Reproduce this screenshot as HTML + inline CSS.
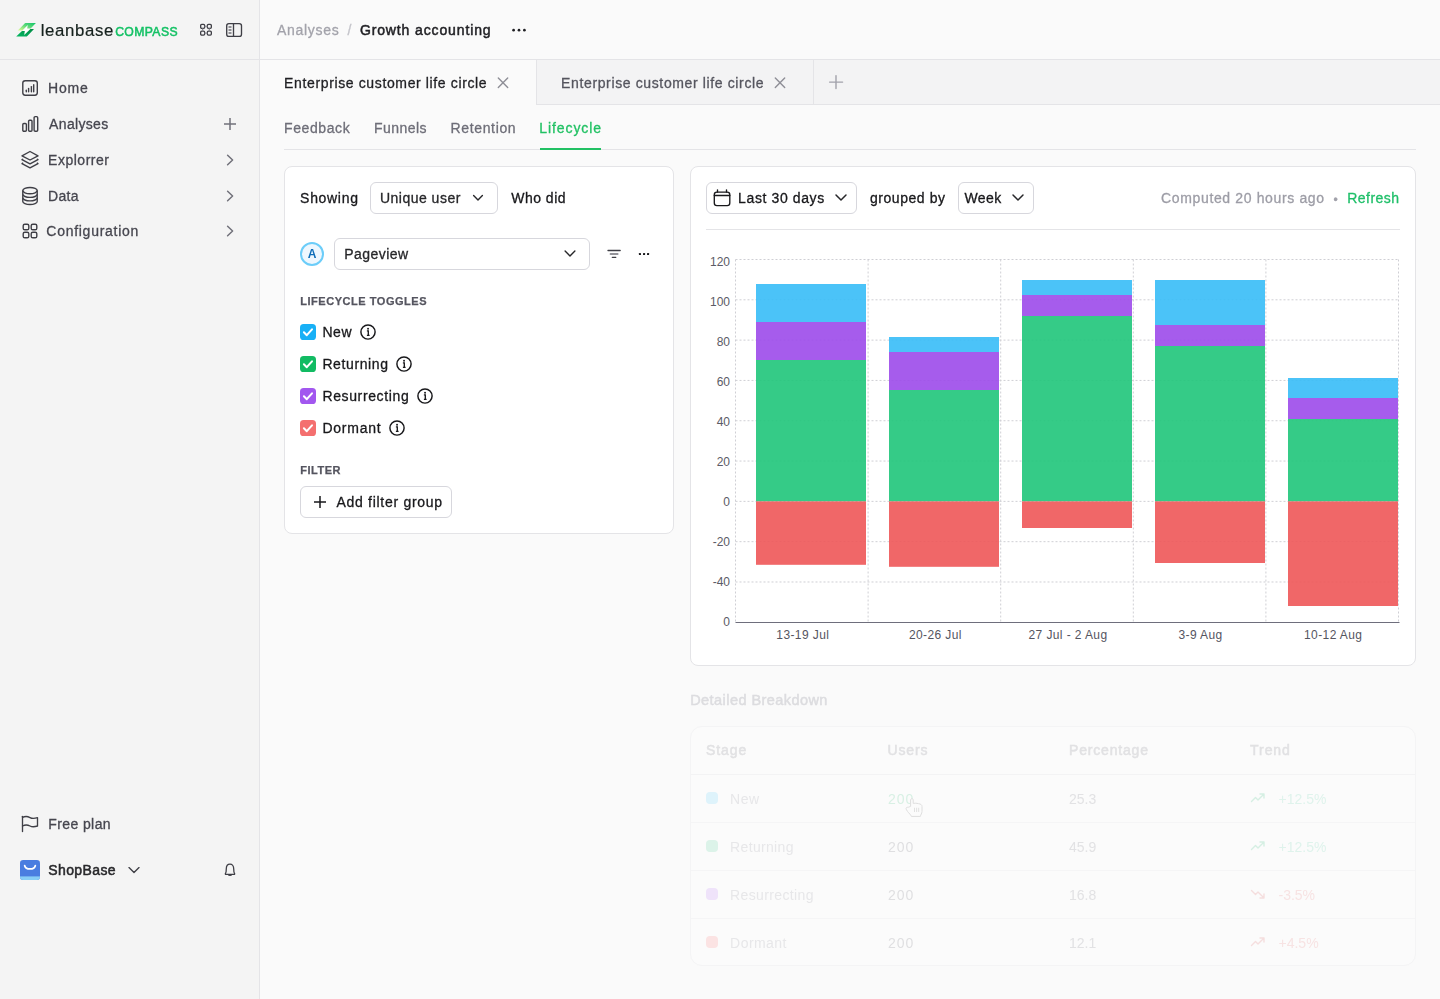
<!DOCTYPE html>
<html><head><meta charset="utf-8"><style>
html,body{margin:0;padding:0;width:1440px;height:999px;overflow:hidden;background:#fafafa;font-family:"Liberation Sans", sans-serif;}
.abs{position:absolute;}
.t{position:absolute;white-space:pre;line-height:1;}
.yl{left:670px;width:60px;text-align:right;font-size:12px;color:#5b5b66;line-height:12px;}
.xl{width:120px;text-align:center;font-size:12px;color:#55555f;letter-spacing:0.4px;}
.box{position:absolute;box-sizing:border-box;}
svg{overflow:visible;}
</style></head><body>
<!-- sidebar -->
<div class="box" style="left:0;top:0;width:260px;height:999px;background:#f4f4f4;border-right:1px solid #e4e4e7;"></div>
<div class="box" style="left:0;top:59px;width:259px;height:1px;background:#e4e4e7;"></div>
<!-- header -->
<div class="box" style="left:259px;top:59px;width:1181px;height:1px;background:#e4e4e7;"></div>
<!-- tab strip -->
<div class="box" style="left:536px;top:60px;width:904px;height:45px;background:#f3f3f4;border-left:1px solid #e4e4e7;border-bottom:1px solid #e4e4e7;"></div>
<div class="box" style="left:813px;top:60px;width:1px;height:44px;background:#e4e4e7;"></div>
<!-- subtab border -->
<div class="box" style="left:284px;top:149px;width:1132px;height:1px;background:#e4e4e7;"></div>
<div class="box" style="left:540px;top:148px;width:61px;height:2px;background:#22c164;"></div>
<!-- left card -->
<div class="box" style="left:284px;top:166px;width:390px;height:368px;background:#fff;border:1px solid #e4e4e7;border-radius:8px;"></div>
<div class="box" style="left:370px;top:182px;width:128px;height:32px;border:1px solid #d7d7dd;border-radius:6px;background:#fff;"></div>
<div class="box" style="left:334px;top:238px;width:256px;height:32px;border:1px solid #d7d7dd;border-radius:6px;background:#fff;"></div>
<div class="box" style="left:300px;top:242px;width:24px;height:24px;border:2px solid #6ccdf9;border-radius:50%;background:#eef7fe;"></div>
<div class="box" style="left:300px;top:486px;width:152px;height:32px;border:1px solid #d7d7dd;border-radius:6px;background:#fff;"></div>
<!-- chart card -->
<div class="box" style="left:690px;top:166px;width:726px;height:500px;background:#fff;border:1px solid #e4e4e7;border-radius:8px;"></div>
<div class="box" style="left:706px;top:182px;width:151px;height:32px;border:1px solid #d7d7dd;border-radius:6px;background:#fff;"></div>
<div class="box" style="left:958px;top:182px;width:76px;height:32px;border:1px solid #d7d7dd;border-radius:6px;background:#fff;"></div>
<div class="box" style="left:706px;top:229px;width:694px;height:1px;background:#e4e4e7;"></div>
<!-- breakdown table -->
<div class="box" style="left:690px;top:726px;width:726px;height:240px;border:1px solid #f4f4f5;border-radius:12px;background:#fbfbfb;"></div>
<div class="box" style="left:691px;top:774px;width:724px;height:1px;background:#f3f3f4;"></div>
<div class="box" style="left:691px;top:822px;width:724px;height:1px;background:#f5f5f6;"></div>
<div class="box" style="left:691px;top:870px;width:724px;height:1px;background:#f5f5f6;"></div>
<div class="box" style="left:691px;top:918px;width:724px;height:1px;background:#f5f5f6;"></div>
<div class="box" style="left:706px;top:792px;width:12px;height:12px;border-radius:4px;background:#def3fb;"></div>
<div class="box" style="left:706px;top:840px;width:12px;height:12px;border-radius:4px;background:#dcf3e9;"></div>
<div class="box" style="left:706px;top:888px;width:12px;height:12px;border-radius:4px;background:#efe3fa;"></div>
<div class="box" style="left:706px;top:936px;width:12px;height:12px;border-radius:4px;background:#fbe3e3;"></div>
<svg class="abs" style="left:0;top:0" width="1440" height="999"><g stroke="#cfcfd4" stroke-width="1" stroke-dasharray="2 2"><line x1="735.5" y1="259.50" x2="1398.5" y2="259.50"/><line x1="735.5" y1="299.81" x2="1398.5" y2="299.81"/><line x1="735.5" y1="340.12" x2="1398.5" y2="340.12"/><line x1="735.5" y1="380.43" x2="1398.5" y2="380.43"/><line x1="735.5" y1="420.74" x2="1398.5" y2="420.74"/><line x1="735.5" y1="461.06" x2="1398.5" y2="461.06"/><line x1="735.5" y1="501.37" x2="1398.5" y2="501.37"/><line x1="735.5" y1="541.68" x2="1398.5" y2="541.68"/><line x1="735.5" y1="581.99" x2="1398.5" y2="581.99"/><line x1="735.50" y1="259.5" x2="735.50" y2="622.3"/><line x1="868.10" y1="259.5" x2="868.10" y2="622.3"/><line x1="1000.70" y1="259.5" x2="1000.70" y2="622.3"/><line x1="1133.30" y1="259.5" x2="1133.30" y2="622.3"/><line x1="1265.90" y1="259.5" x2="1265.90" y2="622.3"/><line x1="1398.50" y1="259.5" x2="1398.50" y2="622.3"/></g><rect x="756" y="284" width="110" height="38" fill="#37bcf7" fill-opacity="0.9"/><rect x="756" y="322" width="110" height="38" fill="#9c4aea" fill-opacity="0.9"/><rect x="756" y="360" width="110" height="141.36666666666662" fill="#1fc57a" fill-opacity="0.9"/><rect x="756" y="501.3666666666666" width="110" height="63.43333333333334" fill="#ee5758" fill-opacity="0.9"/><rect x="889" y="337" width="110" height="15" fill="#37bcf7" fill-opacity="0.9"/><rect x="889" y="352" width="110" height="38" fill="#9c4aea" fill-opacity="0.9"/><rect x="889" y="390" width="110" height="111.36666666666662" fill="#1fc57a" fill-opacity="0.9"/><rect x="889" y="501.3666666666666" width="110" height="65.43333333333334" fill="#ee5758" fill-opacity="0.9"/><rect x="1022" y="280" width="110" height="15" fill="#37bcf7" fill-opacity="0.9"/><rect x="1022" y="295" width="110" height="21" fill="#9c4aea" fill-opacity="0.9"/><rect x="1022" y="316" width="110" height="185.36666666666662" fill="#1fc57a" fill-opacity="0.9"/><rect x="1022" y="501.3666666666666" width="110" height="26.633333333333383" fill="#ee5758" fill-opacity="0.9"/><rect x="1155" y="280" width="110" height="45" fill="#37bcf7" fill-opacity="0.9"/><rect x="1155" y="325" width="110" height="21" fill="#9c4aea" fill-opacity="0.9"/><rect x="1155" y="346" width="110" height="155.36666666666662" fill="#1fc57a" fill-opacity="0.9"/><rect x="1155" y="501.3666666666666" width="110" height="61.63333333333338" fill="#ee5758" fill-opacity="0.9"/><rect x="1288" y="378" width="110" height="20" fill="#37bcf7" fill-opacity="0.9"/><rect x="1288" y="398" width="110" height="21" fill="#9c4aea" fill-opacity="0.9"/><rect x="1288" y="419" width="110" height="82.36666666666662" fill="#1fc57a" fill-opacity="0.9"/><rect x="1288" y="501.3666666666666" width="110" height="104.63333333333338" fill="#ee5758" fill-opacity="0.9"/><line x1="735.5" y1="622.5" x2="1399.5" y2="622.5" stroke="#6e6e7c" stroke-width="1"/></svg>
<div class="t yl" style="top:256.40px;">120</div><div class="t yl" style="top:296.40px;">100</div><div class="t yl" style="top:336.40px;">80</div><div class="t yl" style="top:376.40px;">60</div><div class="t yl" style="top:416.40px;">40</div><div class="t yl" style="top:456.40px;">20</div><div class="t yl" style="top:496.40px;">0</div><div class="t yl" style="top:536.40px;">-20</div><div class="t yl" style="top:576.40px;">-40</div><div class="t yl" style="top:616.40px;">0</div><div class="t xl" style="left:742.80px;top:628.84px;">13-19 Jul</div><div class="t xl" style="left:875.40px;top:628.84px;">20-26 Jul</div><div class="t xl" style="left:1008.00px;top:628.84px;">27 Jul - 2 Aug</div><div class="t xl" style="left:1140.60px;top:628.84px;">3-9 Aug</div><div class="t xl" style="left:1273.20px;top:628.84px;">10-12 Aug</div>
<div style="position:absolute;left:0;top:0;width:1440px;height:999px;will-change:transform"><div class="t" style="left:48.11px;top:81.15px;font-size:14px;font-weight:400;color:#46464f;letter-spacing:0.787px;-webkit-text-stroke:0.3px #46464f;">Home</div>
<div class="t" style="left:49.11px;top:117.15px;font-size:14px;font-weight:400;color:#46464f;letter-spacing:0.330px;-webkit-text-stroke:0.3px #46464f;">Analyses</div>
<div class="t" style="left:48.11px;top:153.15px;font-size:14px;font-weight:400;color:#46464f;letter-spacing:0.503px;-webkit-text-stroke:0.3px #46464f;">Explorrer</div>
<div class="t" style="left:48.11px;top:188.95px;font-size:14px;font-weight:400;color:#46464f;letter-spacing:0.247px;-webkit-text-stroke:0.3px #46464f;">Data</div>
<div class="t" style="left:46.31px;top:223.95px;font-size:14px;font-weight:400;color:#46464f;letter-spacing:0.728px;-webkit-text-stroke:0.3px #46464f;">Configuration</div>
<div class="t" style="left:48.21px;top:817.35px;font-size:14px;font-weight:400;color:#46464f;letter-spacing:0.408px;-webkit-text-stroke:0.3px #46464f;">Free plan</div>
<div class="t" style="left:48.21px;top:862.85px;font-size:14px;font-weight:400;color:#27272a;letter-spacing:0.402px;-webkit-text-stroke:0.5px #27272a;">ShopBase</div>
<div class="t" style="left:40.71px;top:23.18px;font-size:16.8px;font-weight:400;color:#15211d;letter-spacing:0.660px;-webkit-text-stroke:0.2px #15211d;">leanbase</div>
<div class="t" style="left:115.17px;top:25.97px;font-size:12.2px;font-weight:400;color:#14c165;letter-spacing:0.388px;-webkit-text-stroke:0.5px #14c165;">COMPASS</div>
<div class="t" style="left:276.91px;top:23.15px;font-size:14px;font-weight:400;color:#a3a3ab;letter-spacing:0.730px;-webkit-text-stroke:0.3px #a3a3ab;">Analyses</div>
<div class="t" style="left:347.51px;top:23.15px;font-size:14px;font-weight:400;color:#c4c4ca;-webkit-text-stroke:0.3px #c4c4ca;">/</div>
<div class="t" style="left:359.91px;top:23.15px;font-size:14px;font-weight:400;color:#1f1f23;letter-spacing:0.874px;-webkit-text-stroke:0.5px #1f1f23;">Growth accounting</div>
<div class="t" style="left:284.11px;top:75.85px;font-size:14px;font-weight:400;color:#1f1f23;letter-spacing:0.630px;-webkit-text-stroke:0.3px #1f1f23;">Enterprise customer life circle</div>
<div class="t" style="left:561.11px;top:75.85px;font-size:14px;font-weight:400;color:#55555e;letter-spacing:0.627px;-webkit-text-stroke:0.3px #55555e;">Enterprise customer life circle</div>
<div class="t" style="left:284.11px;top:120.85px;font-size:14px;font-weight:400;color:#6e6e78;letter-spacing:0.577px;-webkit-text-stroke:0.3px #6e6e78;">Feedback</div>
<div class="t" style="left:373.91px;top:120.85px;font-size:14px;font-weight:400;color:#6e6e78;letter-spacing:0.485px;-webkit-text-stroke:0.3px #6e6e78;">Funnels</div>
<div class="t" style="left:450.51px;top:120.85px;font-size:14px;font-weight:400;color:#6e6e78;letter-spacing:0.648px;-webkit-text-stroke:0.3px #6e6e78;">Retention</div>
<div class="t" style="left:539.21px;top:120.85px;font-size:14px;font-weight:400;color:#22c164;letter-spacing:0.931px;-webkit-text-stroke:0.3px #22c164;">Lifecycle</div>
<div class="t" style="left:300.11px;top:191.35px;font-size:14px;font-weight:400;color:#18181b;letter-spacing:0.686px;-webkit-text-stroke:0.3px #18181b;">Showing</div>
<div class="t" style="left:379.91px;top:191.45px;font-size:14px;font-weight:400;color:#27272a;letter-spacing:0.492px;-webkit-text-stroke:0.3px #27272a;">Unique user</div>
<div class="t" style="left:511.21px;top:191.45px;font-size:14px;font-weight:400;color:#18181b;letter-spacing:0.493px;-webkit-text-stroke:0.3px #18181b;">Who did</div>
<div class="t" style="left:344.31px;top:246.75px;font-size:14px;font-weight:400;color:#27272a;letter-spacing:0.460px;-webkit-text-stroke:0.3px #27272a;">Pageview</div>
<div class="t" style="left:307.78px;top:248.24px;font-size:12px;font-weight:700;color:#0f6db8;">A</div>
<div class="t" style="left:300.22px;top:296.49px;font-size:11px;font-weight:700;color:#55555f;letter-spacing:0.538px;-webkit-text-stroke:0.25px #55555f;">LIFECYCLE TOGGLES</div>
<div class="t" style="left:322.41px;top:325.15px;font-size:14px;font-weight:400;color:#18181b;letter-spacing:0.602px;-webkit-text-stroke:0.3px #18181b;">New</div>
<div class="t" style="left:322.41px;top:357.15px;font-size:14px;font-weight:400;color:#18181b;letter-spacing:0.602px;-webkit-text-stroke:0.3px #18181b;">Returning</div>
<div class="t" style="left:322.41px;top:389.15px;font-size:14px;font-weight:400;color:#18181b;letter-spacing:0.631px;-webkit-text-stroke:0.3px #18181b;">Resurrecting</div>
<div class="t" style="left:322.41px;top:421.15px;font-size:14px;font-weight:400;color:#18181b;letter-spacing:0.772px;-webkit-text-stroke:0.3px #18181b;">Dormant</div>
<div class="t" style="left:300.22px;top:464.69px;font-size:11px;font-weight:700;color:#55555f;letter-spacing:0.519px;-webkit-text-stroke:0.25px #55555f;">FILTER</div>
<div class="t" style="left:336.41px;top:495.15px;font-size:14px;font-weight:400;color:#18181b;letter-spacing:0.718px;-webkit-text-stroke:0.3px #18181b;">Add filter group</div>
<div class="t" style="left:738.11px;top:191.05px;font-size:14px;font-weight:400;color:#18181b;letter-spacing:0.612px;-webkit-text-stroke:0.3px #18181b;">Last 30 days</div>
<div class="t" style="left:869.91px;top:191.05px;font-size:14px;font-weight:400;color:#18181b;letter-spacing:0.562px;-webkit-text-stroke:0.3px #18181b;">grouped by</div>
<div class="t" style="left:964.41px;top:191.05px;font-size:14px;font-weight:400;color:#18181b;letter-spacing:0.424px;-webkit-text-stroke:0.3px #18181b;">Week</div>
<div class="t" style="left:1161.11px;top:191.25px;font-size:14px;font-weight:400;color:#9d9da6;letter-spacing:0.635px;-webkit-text-stroke:0.3px #9d9da6;">Computed 20 hours ago</div>
<div class="t" style="left:1347.31px;top:191.25px;font-size:14px;font-weight:400;color:#1fbf69;letter-spacing:0.448px;-webkit-text-stroke:0.3px #1fbf69;">Refresh</div>
<div class="t" style="left:1333.38px;top:193.64px;font-size:12px;font-weight:400;color:#a1a1aa;-webkit-text-stroke:0.3px #a1a1aa;">•</div>
<div class="t" style="left:690.19px;top:693.03px;font-size:14.5px;font-weight:400;color:#dcdcdf;letter-spacing:0.440px;-webkit-text-stroke:0.5px #dcdcdf;">Detailed Breakdown</div>
<div class="t" style="left:706.11px;top:743.15px;font-size:14px;font-weight:400;color:#e1e1e3;letter-spacing:0.882px;-webkit-text-stroke:0.5px #e1e1e3;">Stage</div>
<div class="t" style="left:887.51px;top:743.15px;font-size:14px;font-weight:400;color:#e1e1e3;letter-spacing:0.839px;-webkit-text-stroke:0.5px #e1e1e3;">Users</div>
<div class="t" style="left:1069.01px;top:743.15px;font-size:14px;font-weight:400;color:#e1e1e3;letter-spacing:0.812px;-webkit-text-stroke:0.5px #e1e1e3;">Percentage</div>
<div class="t" style="left:1250.11px;top:743.15px;font-size:14px;font-weight:400;color:#e1e1e3;letter-spacing:0.914px;-webkit-text-stroke:0.5px #e1e1e3;">Trend</div>
<div class="t" style="left:730.11px;top:791.65px;font-size:14px;font-weight:400;color:#e7e7e9;letter-spacing:0.552px;">New</div>
<div class="t" style="left:887.91px;top:791.65px;font-size:14px;font-weight:400;color:#d8f0e4;letter-spacing:1.030px;">200</div>
<div class="t" style="left:1069.01px;top:791.65px;font-size:14px;font-weight:400;color:#e2e2e4;">25.3</div>
<div class="t" style="left:1278.51px;top:791.65px;font-size:14px;font-weight:400;color:#dff3ec;">+12.5%</div>
<div class="t" style="left:730.11px;top:839.65px;font-size:14px;font-weight:400;color:#e7e7e9;letter-spacing:0.327px;">Returning</div>
<div class="t" style="left:887.91px;top:839.65px;font-size:14px;font-weight:400;color:#dfdfe1;letter-spacing:1.030px;">200</div>
<div class="t" style="left:1069.01px;top:839.65px;font-size:14px;font-weight:400;color:#e2e2e4;">45.9</div>
<div class="t" style="left:1278.51px;top:839.65px;font-size:14px;font-weight:400;color:#dff3ec;">+12.5%</div>
<div class="t" style="left:730.11px;top:887.65px;font-size:14px;font-weight:400;color:#e7e7e9;letter-spacing:0.368px;">Resurrecting</div>
<div class="t" style="left:887.91px;top:887.65px;font-size:14px;font-weight:400;color:#dfdfe1;letter-spacing:1.030px;">200</div>
<div class="t" style="left:1069.01px;top:887.65px;font-size:14px;font-weight:400;color:#e2e2e4;">16.8</div>
<div class="t" style="left:1278.51px;top:887.65px;font-size:14px;font-weight:400;color:#f7e3e3;">-3.5%</div>
<div class="t" style="left:730.11px;top:935.65px;font-size:14px;font-weight:400;color:#e7e7e9;letter-spacing:0.439px;">Dormant</div>
<div class="t" style="left:887.91px;top:935.65px;font-size:14px;font-weight:400;color:#dfdfe1;letter-spacing:1.030px;">200</div>
<div class="t" style="left:1069.01px;top:935.65px;font-size:14px;font-weight:400;color:#e2e2e4;">12.1</div>
<div class="t" style="left:1278.51px;top:935.65px;font-size:14px;font-weight:400;color:#f7e3e3;">+4.5%</div></div>
<!-- logo mark -->
<svg class="abs" style="left:14px;top:20px" width="24" height="20" viewBox="0 0 24 20">
<defs><linearGradient id="lg1" x1="0.1" y1="1" x2="0.9" y2="0"><stop offset="0" stop-color="#d9fb92"/><stop offset="0.55" stop-color="#5fd97a"/><stop offset="1" stop-color="#17c66a"/></linearGradient>
<linearGradient id="lg2" x1="0" y1="1" x2="1" y2="0"><stop offset="0" stop-color="#05b862"/><stop offset="1" stop-color="#018a44"/></linearGradient></defs>
<path d="M13.8 5 L8.4 10.6 L10.8 10.9 L10.2 14.9 L16.4 9.1 L13.2 8.6 Z" fill="#fff"/>
<path d="M11.6 3 H21.9 L16.6 8.6 H13.2 L13.8 5 L8.4 10.6 H3.8 L10.2 3.9 Q10.9 3 11.6 3 Z" fill="url(#lg1)"/>
<path d="M8 10.9 H10.8 L10.2 14.9 L16.4 9.1 H20 L13.6 15.7 Q12.8 16.6 11.8 16.6 H2.2 Z" fill="url(#lg2)"/>
</svg>
<!-- grid icon -->
<svg class="abs" style="left:199px;top:23px" width="14" height="14" viewBox="0 0 14 14" fill="none" stroke="#3f3f46" stroke-width="1.3">
<rect x="1.65" y="1.45" width="4" height="4" rx="1.1"/><rect x="8.35" y="1.45" width="4" height="4" rx="1.1"/>
<rect x="1.65" y="8.15" width="4" height="4" rx="1.1"/><rect x="8.35" y="8.15" width="4" height="4" rx="1.1"/>
<g stroke="#8f8f96" stroke-width="1.3"><line x1="5.6" y1="3.45" x2="8.4" y2="3.45"/><line x1="5.6" y1="10.15" x2="8.4" y2="10.15"/><line x1="3.65" y1="5.4" x2="3.65" y2="8.2"/><line x1="10.35" y1="5.4" x2="10.35" y2="8.2"/></g>
</svg>
<!-- panel icon -->
<svg class="abs" style="left:225px;top:22px" width="18" height="16" viewBox="0 0 18 16" fill="none" stroke="#3f3f46" stroke-width="1.35">
<rect x="1.7" y="1.6" width="14.8" height="12.8" rx="2.2"/><line x1="8.5" y1="1.6" x2="8.5" y2="14.4"/>
<g stroke-width="1.3" stroke="#5a5a62"><line x1="3.5" y1="5" x2="6.5" y2="5"/><line x1="3.5" y1="8" x2="6.5" y2="8"/><line x1="3.5" y1="11" x2="6.5" y2="11"/></g>
</svg>
<!-- nav icons -->
<svg class="abs" style="left:21px;top:79px" width="18" height="18" viewBox="0 0 18 18" fill="none" stroke="#3f3f46" stroke-width="1.4" stroke-linecap="round">
<rect x="1.8" y="1.7" width="14.5" height="14.5" rx="2.4"/>
<line x1="5.3" y1="11.2" x2="5.3" y2="12.8"/><line x1="7.6" y1="9.4" x2="7.6" y2="12.8"/><line x1="10.4" y1="7.6" x2="10.4" y2="12.8"/><line x1="12.7" y1="5.8" x2="12.7" y2="12.8"/>
</svg>
<svg class="abs" style="left:21px;top:115px" width="18" height="18" viewBox="0 0 18 18" fill="none" stroke="#3f3f46" stroke-width="1.4">
<rect x="1.8" y="8.5" width="3.6" height="7.8" rx="1.1"/>
<rect x="7.6" y="5.3" width="3.4" height="11" rx="1"/>
<rect x="13.1" y="1.6" width="3.6" height="14.7" rx="1.1"/>
</svg>
<svg class="abs" style="left:21px;top:150px" width="18" height="20" viewBox="0 0 18 20" fill="none" stroke="#3f3f46" stroke-width="1.4" stroke-linejoin="round">
<path d="M9 1.5 L17 5.8 L9 10 L1 5.8 Z"/><path d="M2.2 9.1 L1 9.7 L9 13.9 L17 9.7 L15.8 9.1"/><path d="M2.2 13 L1 13.6 L9 17.8 L17 13.6 L15.8 13"/>
</svg>
<svg class="abs" style="left:21px;top:186px" width="18" height="20" viewBox="0 0 18 20" fill="none" stroke="#3f3f46" stroke-width="1.4">
<ellipse cx="9" cy="4.6" rx="7.2" ry="3.1"/><path d="M1.8 4.6 V15.4 A7.2 3.1 0 0 0 16.2 15.4 V4.6"/><path d="M1.8 8.3 A7.2 3.1 0 0 0 16.2 8.3"/><path d="M1.8 11.8 A7.2 3.1 0 0 0 16.2 11.8"/>
</svg>
<svg class="abs" style="left:21px;top:222px" width="18" height="18" viewBox="0 0 18 18" fill="none" stroke="#3f3f46" stroke-width="1.4">
<rect x="2.2" y="2.2" width="5.6" height="5.6" rx="1.6"/><rect x="10.2" y="2.2" width="5.6" height="5.6" rx="1.6"/>
<rect x="2.2" y="10.2" width="5.6" height="5.6" rx="1.6"/><rect x="10.2" y="10.2" width="5.6" height="5.6" rx="1.6"/>
</svg>
<!-- right side nav icons -->
<svg class="abs" style="left:222px;top:116px" width="16" height="16" viewBox="0 0 16 16" fill="none" stroke="#71717a" stroke-width="1.5"><line x1="8" y1="2" x2="8" y2="14"/><line x1="2" y1="8" x2="14" y2="8"/></svg>
<svg class="abs" style="left:222px;top:152px" width="16" height="16" viewBox="0 0 16 16" fill="none" stroke="#71717a" stroke-width="1.5" stroke-linecap="round" stroke-linejoin="round"><path d="M5.6 3.2 L10.6 8 L5.6 12.8"/></svg>
<svg class="abs" style="left:222px;top:188px" width="16" height="16" viewBox="0 0 16 16" fill="none" stroke="#71717a" stroke-width="1.5" stroke-linecap="round" stroke-linejoin="round"><path d="M5.6 3.2 L10.6 8 L5.6 12.8"/></svg>
<svg class="abs" style="left:222px;top:223px" width="16" height="16" viewBox="0 0 16 16" fill="none" stroke="#71717a" stroke-width="1.5" stroke-linecap="round" stroke-linejoin="round"><path d="M5.6 3.2 L10.6 8 L5.6 12.8"/></svg>
<!-- flag -->
<svg class="abs" style="left:20px;top:814px" width="20" height="20" viewBox="0 0 20 20" fill="none" stroke="#3f3f46" stroke-width="1.35" stroke-linecap="round" stroke-linejoin="round">
<path d="M2.5 2.3 V17.6"/><path d="M2.5 3.5 C6 1.5 8 2.5 10 3.6 C12 4.7 14 4.8 17.5 3.6 V12 C14 13.2 12 13.1 10 12 C8 10.9 6 10 2.5 12"/>
</svg>
<!-- shopbase -->
<svg class="abs" style="left:20px;top:860px" width="20" height="20" viewBox="0 0 20 20">
<clipPath id="sbc"><rect x="0" y="0" width="20" height="20" rx="3.2"/></clipPath>
<g clip-path="url(#sbc)"><rect width="20" height="20" fill="#4a7de0"/><rect y="16.4" width="20" height="3.6" fill="#88cdf6"/></g>
<path d="M4.7 5.7 C6 10 14 10 15.3 5.7" fill="none" stroke="#fff" stroke-width="1.8" stroke-linecap="round"/>
</svg>
<svg class="abs" style="left:126px;top:862px" width="16" height="16" viewBox="0 0 16 16" fill="none" stroke="#3f3f46" stroke-width="1.35" stroke-linecap="round" stroke-linejoin="round"><path d="M3 5.6 L8 10.6 L13 5.6"/></svg>
<!-- bell -->
<svg class="abs" style="left:222px;top:862px" width="16" height="16" viewBox="0 0 16 16" fill="none" stroke="#3f3f46" stroke-width="1.3" stroke-linejoin="round">
<path d="M3.4 11.6 C4.2 10.6 4.3 9 4.3 6.8 C4.3 4 5.9 2.2 8 2.2 C10.1 2.2 11.7 4 11.7 6.8 C11.7 9 11.8 10.6 12.6 11.6 C12.8 12 12.6 12.3 12.2 12.3 H3.8 C3.4 12.3 3.2 12 3.4 11.6 Z"/><path d="M6.4 12.4 C6.6 13.8 9.4 13.8 9.6 12.4"/>
</svg>
<!-- header dots -->
<svg class="abs" style="left:510px;top:22px" width="18" height="16" viewBox="0 0 18 16" fill="#1f1f23"><circle cx="3.6" cy="8.2" r="1.35"/><circle cx="9" cy="8.2" r="1.35"/><circle cx="14.4" cy="8.2" r="1.35"/></svg>
<!-- tab x icons -->
<svg class="abs" style="left:495px;top:75px" width="16" height="16" viewBox="0 0 16 16" fill="none" stroke="#8e8e96" stroke-width="1.4" stroke-linecap="round"><path d="M3.3 3 L12.7 12.4 M12.7 3 L3.3 12.4"/></svg>
<svg class="abs" style="left:772px;top:75px" width="16" height="16" viewBox="0 0 16 16" fill="none" stroke="#8e8e96" stroke-width="1.4" stroke-linecap="round"><path d="M3.3 3 L12.7 12.4 M12.7 3 L3.3 12.4"/></svg>
<svg class="abs" style="left:828px;top:74px" width="16" height="16" viewBox="0 0 16 16" fill="none" stroke="#a1a1aa" stroke-width="1.4" stroke-linecap="round"><path d="M8 1.6 V14.6 M1.6 8.1 H14.6"/></svg>
<!-- dropdown chevrons -->
<svg class="abs" style="left:470px;top:190px" width="16" height="16" viewBox="0 0 16 16" fill="none" stroke="#27272a" stroke-width="1.4" stroke-linecap="round" stroke-linejoin="round"><path d="M3.6 5.6 L8 10 L12.4 5.6"/></svg>
<svg class="abs" style="left:562px;top:245px" width="16" height="16" viewBox="0 0 16 16" fill="none" stroke="#27272a" stroke-width="1.4" stroke-linecap="round" stroke-linejoin="round"><path d="M3.1 6 L8 10.9 L12.9 6"/></svg>
<svg class="abs" style="left:833px;top:190px" width="16" height="16" viewBox="0 0 16 16" fill="none" stroke="#27272a" stroke-width="1.5" stroke-linecap="round" stroke-linejoin="round"><path d="M3 5 L8 10 L13 5"/></svg>
<svg class="abs" style="left:1010px;top:190px" width="16" height="16" viewBox="0 0 16 16" fill="none" stroke="#27272a" stroke-width="1.5" stroke-linecap="round" stroke-linejoin="round"><path d="M3 5 L8 10 L13 5"/></svg>
<!-- filter + dots -->
<svg class="abs" style="left:606px;top:246px" width="16" height="16" viewBox="0 0 16 16" fill="none" stroke="#3f3f46" stroke-width="1.3" stroke-linecap="round"><path d="M2 4.5 H14.2"/><path d="M4.3 8 H11.9" stroke="#71717a"/><path d="M6.3 11.3 H9.8"/></svg>
<svg class="abs" style="left:636px;top:246px" width="16" height="16" viewBox="0 0 16 16" fill="#18181b"><rect x="2.9" y="7" width="2.1" height="2.1" rx="0.6"/><rect x="7" y="7" width="2.1" height="2.1" rx="0.6"/><rect x="11" y="7" width="2.1" height="2.1" rx="0.6"/></svg>
<!-- checkboxes -->
<svg class="abs" style="left:300px;top:324px" width="16" height="16" viewBox="0 0 16 16"><rect width="16" height="16" rx="3.6" fill="#18b0f6"/><path d="M3.9 8.3 L6.8 11.2 L12 5.3" fill="none" stroke="#fff" stroke-width="2" stroke-linecap="round" stroke-linejoin="round"/></svg>
<svg class="abs" style="left:300px;top:356px" width="16" height="16" viewBox="0 0 16 16"><rect width="16" height="16" rx="3.6" fill="#12bb63"/><path d="M3.9 8.3 L6.8 11.2 L12 5.3" fill="none" stroke="#fff" stroke-width="2" stroke-linecap="round" stroke-linejoin="round"/></svg>
<svg class="abs" style="left:300px;top:388px" width="16" height="16" viewBox="0 0 16 16"><rect width="16" height="16" rx="3.6" fill="#a257ef"/><path d="M3.9 8.3 L6.8 11.2 L12 5.3" fill="none" stroke="#fff" stroke-width="2" stroke-linecap="round" stroke-linejoin="round"/></svg>
<svg class="abs" style="left:300px;top:420px" width="16" height="16" viewBox="0 0 16 16"><rect width="16" height="16" rx="3.6" fill="#f46f6f"/><path d="M3.9 8.3 L6.8 11.2 L12 5.3" fill="none" stroke="#fff" stroke-width="2" stroke-linecap="round" stroke-linejoin="round"/></svg>
<!-- info icons -->
<svg class="abs" style="left:360px;top:324px" width="16" height="16" viewBox="0 0 16 16" fill="none" stroke="#18181b" stroke-width="1.45"><circle cx="8" cy="8" r="7.1"/><path d="M6.9 6.9 H8.3 V11.4 M6.9 11.4 H9.6" stroke-width="1.35"/><circle cx="8.05" cy="4.75" r="0.95" fill="#18181b" stroke="none"/></svg>
<svg class="abs" style="left:395.5px;top:356px" width="16" height="16" viewBox="0 0 16 16" fill="none" stroke="#18181b" stroke-width="1.45"><circle cx="8" cy="8" r="7.1"/><path d="M6.9 6.9 H8.3 V11.4 M6.9 11.4 H9.6" stroke-width="1.35"/><circle cx="8.05" cy="4.75" r="0.95" fill="#18181b" stroke="none"/></svg>
<svg class="abs" style="left:417px;top:388px" width="16" height="16" viewBox="0 0 16 16" fill="none" stroke="#18181b" stroke-width="1.45"><circle cx="8" cy="8" r="7.1"/><path d="M6.9 6.9 H8.3 V11.4 M6.9 11.4 H9.6" stroke-width="1.35"/><circle cx="8.05" cy="4.75" r="0.95" fill="#18181b" stroke="none"/></svg>
<svg class="abs" style="left:389px;top:420px" width="16" height="16" viewBox="0 0 16 16" fill="none" stroke="#18181b" stroke-width="1.45"><circle cx="8" cy="8" r="7.1"/><path d="M6.9 6.9 H8.3 V11.4 M6.9 11.4 H9.6" stroke-width="1.35"/><circle cx="8.05" cy="4.75" r="0.95" fill="#18181b" stroke="none"/></svg>
<!-- add filter plus -->
<svg class="abs" style="left:312px;top:494px" width="16" height="16" viewBox="0 0 16 16" fill="none" stroke="#18181b" stroke-width="1.5"><path d="M8 2 V14 M2 8 H14"/></svg>
<!-- calendar -->
<svg class="abs" style="left:712px;top:188px" width="20" height="20" viewBox="0 0 20 20" fill="none" stroke="#18181b" stroke-width="1.35" stroke-linecap="round">
<rect x="2.3" y="4.1" width="15.5" height="13.5" rx="2.6"/><path d="M2.3 7.5 H17.8"/><path d="M5.5 1.8 V4.1 M14.5 1.8 V4.1"/>
</svg>
<!-- trend icons (faded) -->
<svg class="abs" style="left:1250px;top:790px" width="16" height="16" viewBox="0 0 16 16" fill="none" stroke="#d5efe3" stroke-width="1.4" stroke-linecap="round" stroke-linejoin="round"><path d="M1.5 11.5 L5.5 7.5 L8 10 L14 4 M10 4 H14 V8"/></svg>
<svg class="abs" style="left:1250px;top:838px" width="16" height="16" viewBox="0 0 16 16" fill="none" stroke="#d5efe3" stroke-width="1.4" stroke-linecap="round" stroke-linejoin="round"><path d="M1.5 11.5 L5.5 7.5 L8 10 L14 4 M10 4 H14 V8"/></svg>
<svg class="abs" style="left:1250px;top:886px" width="16" height="16" viewBox="0 0 16 16" fill="none" stroke="#f5dede" stroke-width="1.4" stroke-linecap="round" stroke-linejoin="round"><path d="M1.5 4.5 L5.5 8.5 L8 6 L14 12 M10 12 H14 V8"/></svg>
<svg class="abs" style="left:1250px;top:934px" width="16" height="16" viewBox="0 0 16 16" fill="none" stroke="#f5dede" stroke-width="1.4" stroke-linecap="round" stroke-linejoin="round"><path d="M1.5 11.5 L5.5 7.5 L8 10 L14 4 M10 4 H14 V8"/></svg>
<!-- cursor -->
<svg class="abs" style="left:904px;top:795px" width="22" height="24" viewBox="0 0 22 24" fill="#fbfbfb" stroke="#dedede" stroke-width="1" stroke-linejoin="round" stroke-linecap="round">
<path d="M6.6 11 V4.6 C6.6 3.4 9.2 3.4 9.2 4.6 V8.4 C10.5 8 13 8.2 14.5 8.6 C16.5 9 18 9.6 18 11.5 V16.5 C18 18.5 16.6 19.5 16.4 21.4 H7.3 C6.8 19.6 5 18.4 3.6 16.6 L2.2 14.2 C1.6 13 2.6 11.9 3.8 12.2 Z"/>
<path d="M10.5 13.2 V16.6 M12.6 13.2 V16.6 M14.7 13.2 V16.6" stroke-width="0.9"/>
</svg>

</body></html>
